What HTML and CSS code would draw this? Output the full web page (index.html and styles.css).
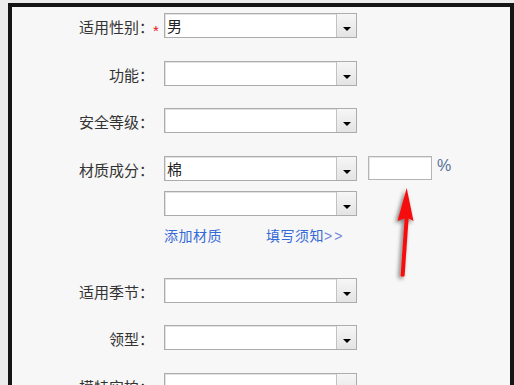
FILE: index.html
```html
<!DOCTYPE html>
<html lang="zh-CN">
<head>
<meta charset="utf-8">
<title>商品属性</title>
<link rel="stylesheet" href="styles.css">
</head>
<body>
<div class="frame">
  <div class="form">
    <div class="row">
      <div class="label">适用性别：</div>
      <div class="star">*</div>
      <div class="select"><span class="value">男</span><span class="btn"><i class="caret"></i></span></div>
    </div>
    <div class="row">
      <div class="label">功能：</div>
      <div class="star"></div>
      <div class="select"><span class="value"></span><span class="btn"><i class="caret"></i></span></div>
    </div>
    <div class="row">
      <div class="label">安全等级：</div>
      <div class="star"></div>
      <div class="select"><span class="value"></span><span class="btn"><i class="caret"></i></span></div>
    </div>
    <div class="row row-material">
      <div class="label">材质成分：</div>
      <div class="star"></div>
      <div class="material">
        <div class="mat-line">
          <div class="select"><span class="value">棉</span><span class="btn"><i class="caret"></i></span></div>
          <div class="pct-input"></div>
          <span class="pct">%</span>
        </div>
        <div class="select select-second"><span class="value"></span><span class="btn"><i class="caret"></i></span></div>
        <div class="links">
          <a class="link" href="#">添加材质</a>
          <a class="link" href="#">填写须知<span class="gt">&gt;&gt;</span></a>
        </div>
      </div>
    </div>
    <div class="row">
      <div class="label">适用季节：</div>
      <div class="star"></div>
      <div class="select"><span class="value"></span><span class="btn"><i class="caret"></i></span></div>
    </div>
    <div class="row">
      <div class="label">领型：</div>
      <div class="star"></div>
      <div class="select"><span class="value"></span><span class="btn"><i class="caret"></i></span></div>
    </div>
    <div class="row">
      <div class="label">模特实拍：</div>
      <div class="star"></div>
      <div class="select"><span class="value"></span><span class="btn"><i class="caret"></i></span></div>
    </div>
  </div>
  <svg class="arrow" width="40" height="105" viewBox="0 0 40 105" xmlns="http://www.w3.org/2000/svg">
    <defs>
      <filter id="shadow" x="-50%" y="-20%" width="200%" height="140%">
        <feDropShadow dx="-2" dy="2" stdDeviation="2" flood-color="#000" flood-opacity="0.55"/>
      </filter>
    </defs>
    <g filter="url(#shadow)" fill="#f50d0d">
      <path d="M21.7 8 L28.5 41 L23.6 38.5 L19.6 96 Q17.6 97.5 15.6 96 L19.6 38.5 L12.5 41 Z"/>
    </g>
  </svg>
</div>
</body>
</html>
```

FILE: styles.css
```css
html, body {
  margin: 0;
  padding: 0;
}

body {
  background: #ececec;
  width: 514px;
  height: 385px;
  overflow: hidden;
  font-family: "Noto Sans CJK SC", "Noto Sans", sans-serif;
}

.frame {
  position: relative;
  margin: 3px 0 0 8px;
  width: 498px;
  height: 420px;
  border: 4px solid #151515;
  background: #f7f7f7;
}

.form {
  padding-top: 6px;
  display: flex;
  flex-direction: column;
}

.row {
  display: flex;
  align-items: flex-start;
  margin-bottom: 22.5px;
}

.row-material {
  margin-bottom: 32px;
}

.label {
  box-sizing: border-box;
  width: 142px;
  height: 25px;
  flex: none;
  text-align: right;
  font-size: 15px;
  line-height: 25px;
  padding-top: 1px;
  color: #333;
  white-space: nowrap;
}

.star {
  width: 10px;
  height: 25px;
  flex: none;
  margin-left: -1px;
  margin-right: 1px;
  color: #e8141a;
  font-family: "Liberation Sans", sans-serif;
  font-size: 15px;
  line-height: 35px;
}

.select {
  box-sizing: border-box;
  width: 193px;
  height: 25px;
  display: flex;
  border: 1px solid #acacac;
  background: #fff;
  box-shadow: inset 1px 1px 0 #e2e2e2;
}

.value {
  flex: 1;
  padding-left: 2px;
  padding-top: 1px;
  font-size: 15px;
  line-height: 22px;
  color: #222;
}

.btn {
  width: 20px;
  flex: none;
  border-left: 1px solid #c2c2c2;
  background: linear-gradient(#f6f6f6, #e4e4e4);
  display: flex;
  align-items: center;
  justify-content: center;
  padding-top: 7px;
  box-sizing: border-box;
}

.caret {
  width: 0;
  height: 0;
  border-left: 4px solid transparent;
  border-right: 4px solid transparent;
  border-top: 4px solid #000;
}

.material {
  display: flex;
  flex-direction: column;
}

.mat-line {
  display: flex;
  align-items: flex-start;
}

.pct-input {
  box-sizing: border-box;
  width: 64px;
  height: 24px;
  margin-left: 11px;
  border: 1px solid #b4b4b4;
  background: #fff;
  box-shadow: inset 1px 1px 0 #e6e6e6;
}

.pct {
  margin-left: 5px;
  font-family: "Liberation Sans", sans-serif;
  font-size: 16px;
  line-height: 20px;
  color: #56709a;
}

.select-second {
  margin-top: 10px;
}

.links {
  margin-top: 9px;
  display: flex;
  gap: 44px;
  line-height: 20px;
  font-size: 14px;
}

.link {
  color: #356ad6;
  text-decoration: none;
  letter-spacing: 0.5px;
}

.gt {
  color: #7382d6;
  letter-spacing: 2px;
  font-family: "Liberation Sans", sans-serif;
}

.arrow {
  position: absolute;
  left: 373px;
  top: 173px;
}
```
